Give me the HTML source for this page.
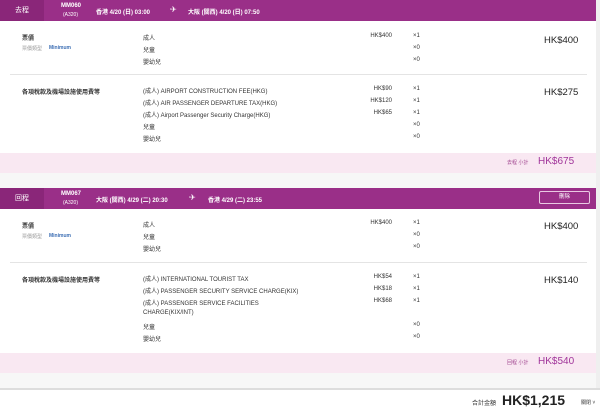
<!DOCTYPE html><html><head><meta charset="utf-8"><style>
body{margin:0;width:600px;height:410px;overflow:hidden;background:#f7f7f7;font-family:"Liberation Sans","Noto Sans CJK TC",sans-serif;color:#333;position:relative}
.a{position:absolute;white-space:nowrap}
.card{position:absolute;left:0;width:596px;background:#fff}
.hd{position:absolute;left:0;width:596px;height:21px;background:#9a2f88;color:#fff}
.hd .t{position:absolute;left:0;top:0;width:44px;height:21px;background:#8a2679;font-size:7px;line-height:21px;text-align:center}
.s{font-size:6px}
.m{font-size:6px}
.big{font-size:9.5px;color:#222}
.pk{position:absolute;left:0;width:596px;height:20px;background:#f9e8f2}
.ln{position:absolute;left:10px;width:577px;height:1px;background:#e4e4e4}
</style></head><body>
<div style="position:absolute;left:596px;top:0;width:4px;height:410px;background:#efefef"></div>
<div class="card" style="top:0;height:173px"></div>
<div class="hd" style="top:0"><div class="t">去程</div>
<div class="a s" style="left:61px;top:3px;font-weight:bold">MM060</div><div class="a" style="left:63px;top:12px;font-size:5px">(A320)</div>
<div class="a s" style="left:96px;top:7px;font-weight:bold">香港 4/20 (日) 03:00</div>
<div class="a" style="left:170px;top:5px;font-size:8px">✈</div>
<div class="a s" style="left:188px;top:7px;font-weight:bold">大阪 (關西) 4/20 (日) 07:50</div></div>
<div class="a s" style="left:22px;top:33px;font-weight:bold">票價</div>
<div class="a" style="left:22px;top:45px;font-size:5px;color:#999">票價類型</div><div class="a" style="left:49px;top:45px;font-size:5px;color:#3b6db3;font-weight:bold">Minimum</div>
<div class="a m" style="left:143px;top:33px">成人</div><div class="a m" style="left:143px;top:45px">兒童</div><div class="a m" style="left:143px;top:57px">嬰幼兒</div>
<div class="a m" style="right:208px;top:33px">HK$400</div>
<div class="a m" style="left:413px;top:33px">×1</div><div class="a m" style="left:413px;top:45px">×0</div><div class="a m" style="left:413px;top:57px">×0</div>
<div class="a big" style="left:544px;top:35px">HK$400</div>
<div class="ln" style="top:74px"></div>
<div class="a s" style="left:22px;top:87px;font-weight:bold">各項稅款及機場設施使用費等</div>
<div class="a m" style="left:143px;top:86px">(成人) AIRPORT CONSTRUCTION FEE(HKG)</div>
<div class="a m" style="left:143px;top:98px">(成人) AIR PASSENGER DEPARTURE TAX(HKG)</div>
<div class="a m" style="left:143px;top:110px">(成人) Airport Passenger Security Charge(HKG)</div>
<div class="a m" style="left:143px;top:122px">兒童</div><div class="a m" style="left:143px;top:134px">嬰幼兒</div>
<div class="a m" style="right:208px;top:86px">HK$90</div><div class="a m" style="right:208px;top:98px">HK$120</div><div class="a m" style="right:208px;top:110px">HK$65</div>
<div class="a m" style="left:413px;top:86px">×1</div><div class="a m" style="left:413px;top:98px">×1</div><div class="a m" style="left:413px;top:110px">×1</div><div class="a m" style="left:413px;top:122px">×0</div><div class="a m" style="left:413px;top:134px">×0</div>
<div class="a big" style="left:544px;top:87px">HK$275</div>
<div class="pk" style="top:153px"></div>
<div class="a" style="left:507px;top:159px;font-size:5px;color:#a0448f">去程 小計</div>
<div class="a" style="left:538px;top:156px;font-size:10px;color:#a0349a">HK$675</div>
<div class="card" style="top:189px;height:184px"></div>
<div class="hd" style="top:188px"><div class="t">回程</div>
<div class="a s" style="left:61px;top:3px;font-weight:bold">MM067</div><div class="a" style="left:63px;top:12px;font-size:5px">(A320)</div>
<div class="a s" style="left:96px;top:7px;font-weight:bold">大阪 (關西) 4/29 (二) 20:30</div>
<div class="a" style="left:189px;top:5px;font-size:8px">✈</div>
<div class="a s" style="left:208px;top:7px;font-weight:bold">香港 4/29 (二) 23:55</div>
<div style="position:absolute;left:539px;top:3px;width:51px;height:13px;border:1px solid #e9c9e2;border-radius:2px;box-sizing:border-box;font-size:5.5px;text-align:center;line-height:11px">刪除</div></div>
<div class="a s" style="left:22px;top:221px;font-weight:bold">票價</div>
<div class="a" style="left:22px;top:233px;font-size:5px;color:#999">票價類型</div><div class="a" style="left:49px;top:233px;font-size:5px;color:#3b6db3;font-weight:bold">Minimum</div>
<div class="a m" style="left:143px;top:220px">成人</div><div class="a m" style="left:143px;top:232px">兒童</div><div class="a m" style="left:143px;top:244px">嬰幼兒</div>
<div class="a m" style="right:208px;top:220px">HK$400</div>
<div class="a m" style="left:413px;top:220px">×1</div><div class="a m" style="left:413px;top:232px">×0</div><div class="a m" style="left:413px;top:244px">×0</div>
<div class="a big" style="left:544px;top:221px">HK$400</div>
<div class="ln" style="top:262px"></div>
<div class="a s" style="left:22px;top:275px;font-weight:bold">各項稅款及機場設施使用費等</div>
<div class="a m" style="left:143px;top:274px">(成人) INTERNATIONAL TOURIST TAX</div>
<div class="a m" style="left:143px;top:286px">(成人) PASSENGER SECURITY SERVICE CHARGE(KIX)</div>
<div class="a m" style="left:143px;top:298px">(成人) PASSENGER SERVICE FACILITIES</div>
<div class="a m" style="left:143px;top:310px">CHARGE(KIX/INT)</div>
<div class="a m" style="left:143px;top:322px">兒童</div><div class="a m" style="left:143px;top:334px">嬰幼兒</div>
<div class="a m" style="right:208px;top:274px">HK$54</div><div class="a m" style="right:208px;top:286px">HK$18</div><div class="a m" style="right:208px;top:298px">HK$68</div>
<div class="a m" style="left:413px;top:274px">×1</div><div class="a m" style="left:413px;top:286px">×1</div><div class="a m" style="left:413px;top:298px">×1</div><div class="a m" style="left:413px;top:322px">×0</div><div class="a m" style="left:413px;top:334px">×0</div>
<div class="a big" style="left:544px;top:275px">HK$140</div>
<div class="pk" style="top:353px"></div>
<div class="a" style="left:507px;top:359px;font-size:5px;color:#a0448f">回程 小計</div>
<div class="a" style="left:538px;top:356px;font-size:10px;color:#a0349a">HK$540</div>
<div style="position:absolute;left:0;top:388px;width:600px;height:2px;background:#ddd"></div>
<div style="position:absolute;left:0;top:390px;width:600px;height:20px;background:#fff"></div>
<div class="a" style="left:472px;top:398px;font-size:6px">合計金額</div>
<div class="a" style="left:502px;top:392px;font-size:14px;font-weight:bold;color:#222">HK$1,215</div>
<div class="a" style="left:581px;top:399px;font-size:5px">關閉 ˅</div>
</body></html>
